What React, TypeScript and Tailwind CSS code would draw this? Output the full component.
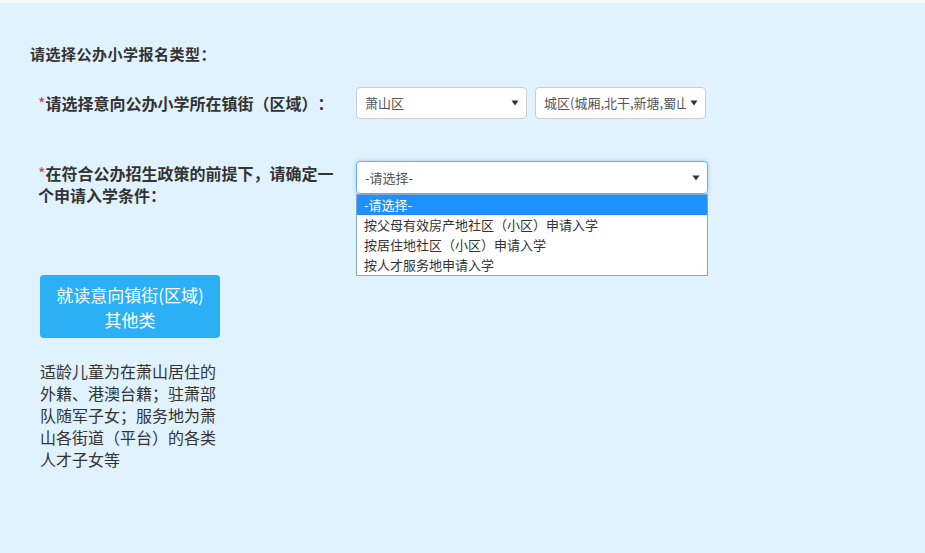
import React from 'react';

const font = { fontFamily: '"Noto Sans CJK SC", "Noto Sans", sans-serif' };

function Caret() {
  return (
    <svg width="8" height="6" viewBox="0 0 8 6" className="shrink-0">
      <path d="M0.5 0.5 L7.5 0.5 L4 5.5 Z" fill="#333" />
    </svg>
  );
}

function FakeSelect({ value, width, focused }: { value: string; width: string; focused?: boolean }) {
  return (
    <div
      className={`${width} bg-white rounded-[4px] border flex items-center pl-[8px] pr-[7px] gap-1 ${
        focused ? 'h-[33px] border-[#66afe9] shadow-[0_0_4px_rgba(102,175,233,0.5)]' : 'h-[32px] border-[#ccc]'
      }`}
    >
      <span className="flex-1 overflow-hidden whitespace-nowrap text-[13px] leading-[20px] text-[#555]">{value}</span>
      <Caret />
    </div>
  );
}

const options = ['-请选择-', '按父母有效房产地社区（小区）申请入学', '按居住地社区（小区）申请入学', '按人才服务地申请入学'];

export default function App() {
  return (
    <div className="min-h-[553px] bg-[#e0f2fd] border-t-[3px] border-[#f6fafd] text-[#333]" style={font}>
      <div className="pl-[30px] pt-[41px]">
        {/* Title */}
        <h2 className="text-[15px] font-bold leading-[20px] text-[#333] tracking-[0.5px]">请选择公办小学报名类型：</h2>

        {/* Row 1 */}
        <div className="flex items-center mt-[23px] ml-[8px]">
          <div className="w-[318px] text-[16px] font-bold leading-[22px]">
            <span className="text-[#e4393c] font-normal">*</span>请选择意向公办小学所在镇街（区域）<span className="ml-[8px]">：</span>
          </div>
          <div className="flex gap-[8px]">
            <FakeSelect value="萧山区" width="w-[171px]" />
            <FakeSelect value="城区(城厢,北干,新塘,蜀山,宁围,新街,盈丰)" width="w-[171px]" />
          </div>
        </div>

        {/* Row 2 */}
        <div className="flex items-start mt-[42px] ml-[8px]">
          <div className="w-[303px] mr-[15px] text-[16px] font-bold leading-[22px] pt-[1px]">
            <span className="text-[#e4393c] font-normal">*</span>在符合公办招生政策的前提下，请确定一个申请入学条件：
          </div>
          <div className="relative">
            <FakeSelect value="-请选择-" width="w-[352px]" focused />
            <div className="absolute left-0 top-[33px] w-[352px] bg-white border border-[#7fa6d1] z-10">
              {options.map((o, i) => (
                <div
                  key={o}
                  className={`h-[20px] pl-[7px] text-[13px] leading-[20px] ${
                    i === 0 ? 'bg-[#1e90ff] text-white' : 'text-[#333]'
                  }`}
                >
                  {o}
                </div>
              ))}
            </div>
          </div>
        </div>

        {/* Category button */}
        <div className="ml-[10px] mt-[69px] w-[180px]">
          <button className="w-[180px] h-[63px] rounded-[4px] bg-[#2cb0f5] text-white text-[17px] leading-[25px] flex flex-col items-center justify-center">
            <span>就读意向镇街(区域)</span>
            <span>其他类</span>
          </button>
          <p className="mt-[22px] w-[180px] text-[16px] leading-[22px] text-[#333]">
            适龄儿童为在萧山居住的外籍、港澳台籍；驻萧部队随军子女；服务地为萧山各街道（平台）的各类人才子女等
          </p>
        </div>
      </div>
    </div>
  );
}
